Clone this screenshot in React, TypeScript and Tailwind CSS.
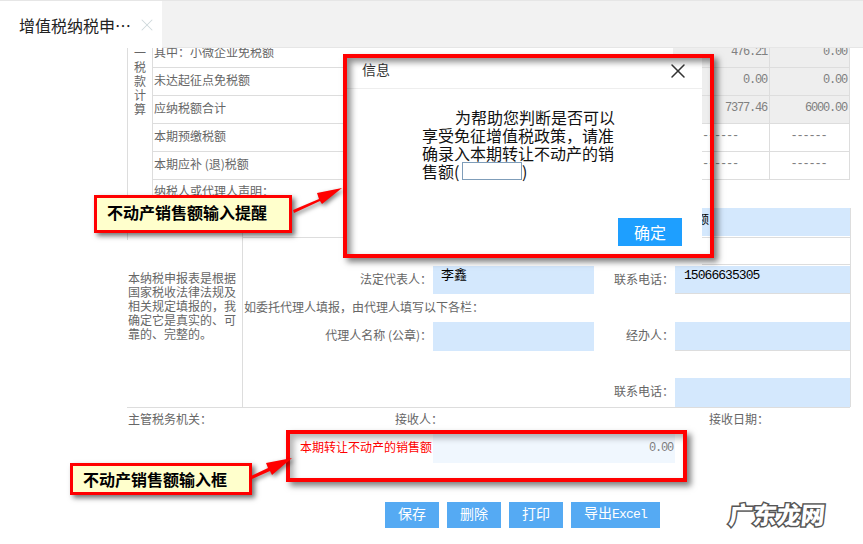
import { X } from 'lucide-react';

const MONO = "font-['Liberation_Mono',monospace]";

interface TaxRow {
  label: string;
  col3: string;
  col4: string;
  shaded?: boolean;
}

const taxRows: TaxRow[] = [
  { label: '其中：小微企业免税额', col3: '476.21', col4: '0.00', shaded: true },
  { label: '未达起征点免税额', col3: '0.00', col4: '0.00', shaded: true },
  { label: '应纳税额合计', col3: '7377.46', col4: '6000.00', shaded: true },
  { label: '本期预缴税额', col3: '------', col4: '------' },
  { label: '本期应补 (退)税额', col3: '------', col4: '------' },
];

function FormRow({ label, value, label2, value2, height }: { label?: string; value?: string; label2?: string; value2?: string; height: string }) {
  return (
    <div className={`grid grid-cols-[190px_161px_81px_175px] ${height}`}>
      <div className="pr-px pb-[3px] flex items-center justify-end">{label}</div>
      <div className="bg-[#d4e8fd] pl-2 text-black text-[13px] leading-[16px]">{value}</div>
      <div className="pr-px pb-[3px] flex items-center justify-end">{label2}</div>
      <div className={`bg-[#d4e8fd] border-b border-[#dddddd] pl-[9px] pt-[2px] text-black text-[13px] tracking-[-0.95px] leading-[16px] ${MONO}`}>{value2}</div>
    </div>
  );
}

function ActionButton({ children, width }: { children: React.ReactNode; width: string }) {
  return (
    <button type="button" className={`${width} h-[26px] pb-[4px] bg-[#55aaf3] text-white text-[14px] leading-[20px] text-center`}>
      {children}
    </button>
  );
}

export default function App() {
  return (
    <div className="relative w-[863px] h-[544px] overflow-hidden bg-white text-[12px] text-[#666666] font-['Noto_Sans_CJK_SC',sans-serif]">
      {/* tab bar */}
      <div className="h-[48px] bg-[#f2f2f2] border-t border-b border-[#e6e6e6] flex">
        <div className="w-[162px] h-[47px] bg-white flex items-center pl-[19px] text-[16px] text-[#222222]">
          <span className="w-[118px] whitespace-nowrap">增值税纳税申…</span>
          <X size={20} strokeWidth={1.25} className="text-[#cfd8dc]" />
        </div>
      </div>

      {/* form */}
      <div className="h-[496px] overflow-hidden">
        <div className="-mt-2 ml-[127px] w-[723px]">
          <div className="flex">
            <div className="w-[25px] border-l border-[#dddddd] pl-[6px] pt-[6px] leading-[14px]">
              <div>一</div>
              <div>税</div>
              <div>款</div>
              <div>计</div>
              <div>算</div>
            </div>
            <div className="flex-1 border-l border-[#dddddd]">
              {taxRows.map((row) => (
                <div key={row.label} className="h-[28px] border-b border-r border-[#dddddd] grid grid-cols-[1fr_96px_80px]">
                  <div className="pl-px pb-[3px] flex items-center whitespace-nowrap">{row.label}</div>
                  <div className={`pb-[3px] pr-[2px] flex items-center text-[12px] tracking-[-1.2px] text-[#808080] ${MONO} ${row.shaded ? 'bg-[#eeeeee] justify-end' : 'justify-center'}`}>{row.col3}</div>
                  <div className={`border-l border-[#dddddd] pb-[3px] pr-[2px] flex items-center text-[12px] tracking-[-1.2px] text-[#808080] ${MONO} ${row.shaded ? 'bg-[#eeeeee] justify-end' : 'justify-center'}`}>{row.col4}</div>
                </div>
              ))}
            </div>
          </div>

          <div className="h-[28px] flex">
            <div className="w-[25px] border-l border-[#dddddd]" />
            <div className="flex-1 border-l border-[#dddddd] pl-px pt-[3px] leading-[16px]">纳税人或代理人声明：</div>
          </div>

          {/* declaration block */}
          <div className="flex border-b border-[#dddddd]">
            <div className="w-[115px] shrink-0">
              <div className="h-[32px] border-l border-[#dddddd]" />
              <div className="pl-px pt-[31px] leading-[14px] whitespace-nowrap">
                <div>本纳税申报表是根据</div>
                <div>国家税收法律法规及</div>
                <div>相关规定填报的，我</div>
                <div>确定它是真实的、可</div>
                <div>靠的、完整的。</div>
              </div>
            </div>
            <div className="flex-1 border-l border-r border-[#dddddd]">
              <div className="h-[30px] border-b border-[#dddddd] pb-px pl-[432px]">
                <div className="h-full bg-[#d4e8fd] pl-[22px] text-black leading-[22px]">额</div>
              </div>
              <div className="h-[27px] border-b border-[#dddddd] ml-[459px]" />
              <FormRow height="h-[29px] pt-px" label="法定代表人：" value="李鑫" label2="联系电话：" value2="15066635305" />
              <div className="h-[28px] pl-px flex items-center pb-[3px] whitespace-nowrap">如委托代理人填报，由代理人填写以下各栏：</div>
              <FormRow height="h-[29px]" label="代理人名称 (公章)：" label2="经办人：" />
              <div className="h-[27px]" />
              <div className="h-[29px] grid grid-cols-[432px_175px]">
                <div className="pr-px pb-[3px] flex items-center justify-end">联系电话：</div>
                <div className="bg-[#d4e8fd]" />
              </div>
            </div>
          </div>

          <div className="h-[22px] pl-px flex items-center">
            <div className="w-[267px]">主管税务机关：</div>
            <div className="w-[314px]">接收人：</div>
            <div>接收日期：</div>
          </div>

          <div className="mt-[4px] h-[29px] grid grid-cols-[306px_242px]">
            <div className="pl-[173px] pt-[4px] leading-[18px] text-[#ff0000] whitespace-nowrap">本期转让不动产的销售额</div>
            <div className={`bg-[#f0f7fe] pr-[2px] pt-[6px] leading-[16px] text-right text-[12px] tracking-[-1.2px] text-[#808080] ${MONO}`}>0.00</div>
          </div>

          <div className="mt-[39px] ml-[258px] flex gap-2">
            <ActionButton width="w-[54px]">保存</ActionButton>
            <ActionButton width="w-[54px]">删除</ActionButton>
            <ActionButton width="w-[54px]">打印</ActionButton>
            <ActionButton width="w-[89px]">
              导出<span className={`text-[13px] tracking-[-0.8px] ${MONO}`}>Excel</span>
            </ActionButton>
          </div>
        </div>
      </div>

      {/* dialog */}
      <div className="absolute left-[347px] top-[58px] w-[355px] h-[195px] bg-white flex flex-col">
        <div className="h-[31px] shrink-0 border-b border-[#eeeeee] pl-[15px] pr-[12px] flex items-center justify-between text-[14px] text-[#333333]">
          <span className="pb-[10px] pt-[2px] leading-[16px]">信息</span>
          <X size={24} strokeWidth={1.5} className="text-[#333333] mb-[4px]" />
        </div>
        <div className="pl-[75px] pt-[19px] text-[16px] leading-[18px] text-[#111111] whitespace-nowrap">
          <div className="pl-[33px]">为帮助您判断是否可以</div>
          <div>享受免征增值税政策，请准</div>
          <div>确录入本期转让不动产的销</div>
          <div className="flex items-center h-[18px]">
            <span className="w-[40px]">售额(</span>
            <input readOnly className="w-[60px] h-[18px] bg-white border border-[#7f9db9]" />
            <span>)</span>
          </div>
        </div>
        <button type="button" className="mt-auto mb-[7px] ml-[271px] w-[64px] h-[28px] pb-px bg-[#1e9fff] text-white text-[16px]">确定</button>
      </div>

      {/* annotations */}
      <div className="absolute left-[343px] top-[54px] w-[371px] h-[204px] border-4 border-[#ff0000] shadow-[4px_4px_6px_rgba(0,0,0,0.5),inset_4px_4px_6px_rgba(0,0,0,0.45)]" />
      <div className="absolute left-[286px] top-[430px] w-[401px] h-[52px] border-4 border-[#ff0000] shadow-[4px_4px_6px_rgba(0,0,0,0.5),inset_4px_4px_6px_rgba(0,0,0,0.3)]" />

      <div className="absolute left-[94px] top-[195px] w-[198px] h-[38px] border-[3px] border-[#ff0000] bg-[#ffffcc] pl-[10px] pb-[4px] flex items-center text-[16px] font-bold text-black shadow-[3px_3px_5px_rgba(0,0,0,0.55)]">
        不动产销售额输入提醒
      </div>
      <div className="absolute left-[70px] top-[463px] w-[182px] h-[32px] border-[3px] border-[#ff0000] bg-[#ffffcc] pl-[10px] flex items-center text-[16px] font-bold text-black shadow-[3px_3px_5px_rgba(0,0,0,0.55)]">
        不动产销售额输入框
      </div>

      <svg className="absolute left-[290px] top-[185px] drop-shadow-[2px_2px_2px_rgba(0,0,0,0.5)]" width="56" height="32" viewBox="290 185 56 32">
        <polygon points="293,210 319,199 317,193 342,188 322,204 320,201 294,213" fill="#ff0000" />
      </svg>
      <svg className="absolute left-[248px] top-[455px] drop-shadow-[2px_2px_2px_rgba(0,0,0,0.5)]" width="48" height="26" viewBox="248 455 48 26">
        <polygon points="251,476 268,468 266,463 292,458 272,475 270,471 252,479" fill="#ff0000" />
      </svg>

      {/* watermark */}
      <div className="absolute left-[729px] top-[499px] -skew-x-6 text-[24px] leading-[30px] font-black text-white [-webkit-text-stroke:3px_#555555] [paint-order:stroke_fill] whitespace-nowrap">
        广东龙网
      </div>
    </div>
  );
}
